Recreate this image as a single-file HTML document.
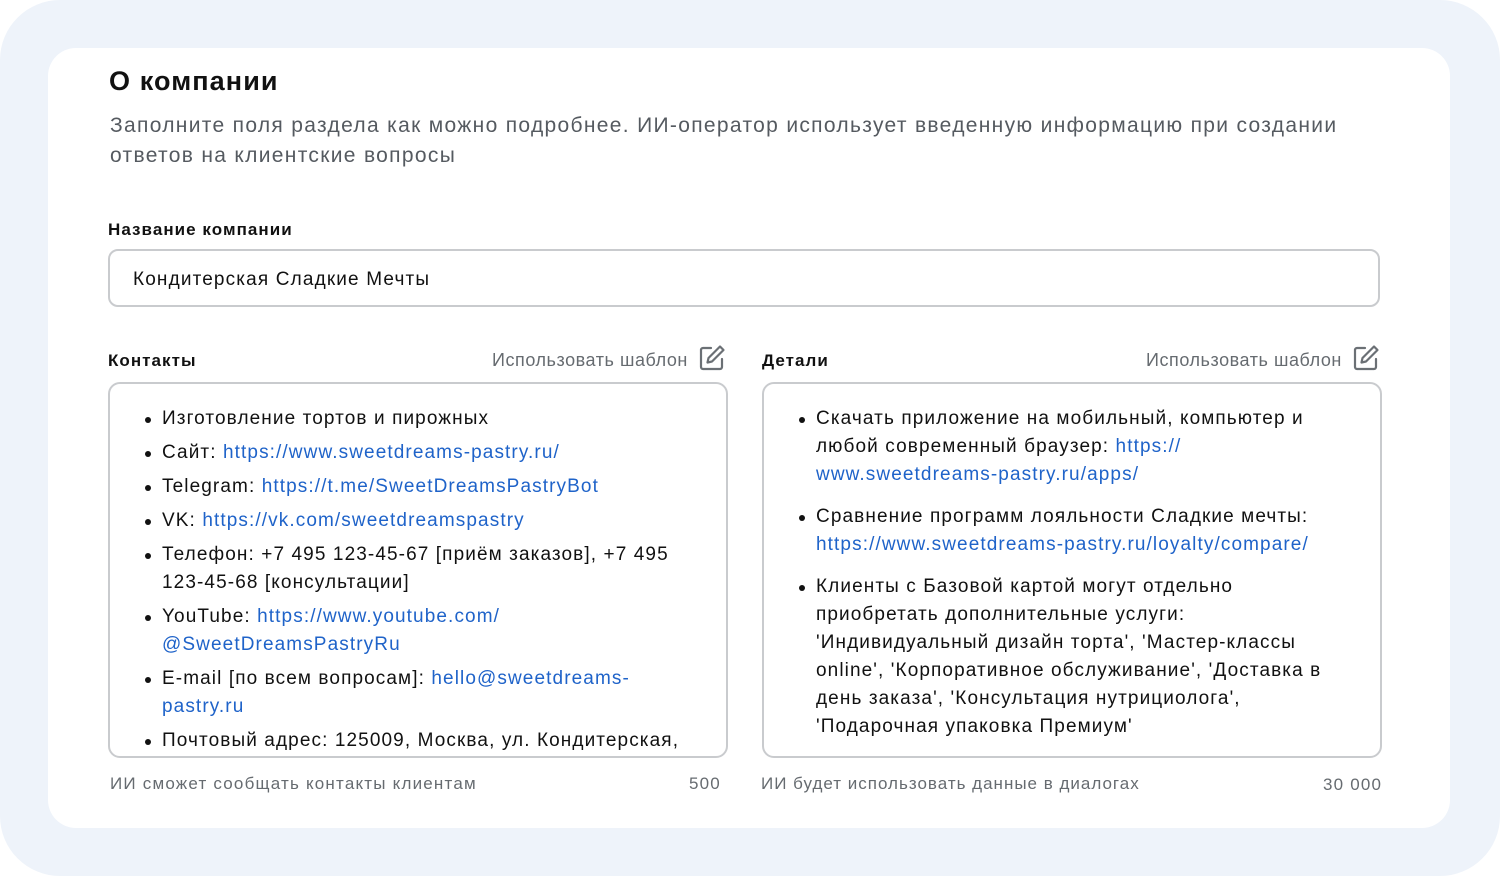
<!DOCTYPE html>
<html><head><meta charset="utf-8"><style>
*{box-sizing:border-box;margin:0;padding:0}
body{width:1500px;height:876px;background:#fff;font-family:"Liberation Sans",sans-serif;overflow:hidden;position:relative}
.bg{position:absolute;left:0;top:0;width:1500px;height:876px;background:#eef3fa;border-radius:60px}
.card{position:absolute;left:48px;top:48px;width:1402px;height:780px;background:#fff;border-radius:28px}
.abs{position:absolute}
h1{position:absolute;left:109px;top:66px;font-size:27px;font-weight:bold;color:#111;letter-spacing:1.1px}
.sub{left:110px;top:111px;font-size:21px;line-height:30px;color:#555a60;width:1270px;letter-spacing:1.32px}
.lbl{font-size:17px;font-weight:bold;color:#111;letter-spacing:1.05px}
.inp{left:108px;top:249px;width:1272px;height:58px;border:2px solid #c9cbce;border-radius:10px;font-size:19px;padding:18px 0 0 23px;color:#111;letter-spacing:1.15px}
.tpl{font-size:18px;color:#666b70;letter-spacing:.55px}
.ta{width:620px;height:376px;border:2px solid #c9cbce;border-radius:12px;overflow:hidden;padding:21px 20px 0 0}
ul{list-style:none;font-size:19px;line-height:28px;color:#111;letter-spacing:1.1px}
li{position:relative;padding-left:52px;margin-bottom:6px}
li:before{content:"";position:absolute;left:35px;top:12px;width:6px;height:6px;border-radius:50%;background:#111}
.r li{margin-bottom:14px}
a{color:#1f63c9;text-decoration:none}
.foot{font-size:17px;color:#666b70;letter-spacing:1.2px}
</style></head><body>
<div class="bg"></div>
<div class="card"></div>
<h1>О компании</h1>
<div class="abs sub">Заполните поля раздела как можно подробнее. ИИ-оператор использует введенную информацию при создании ответов на клиентские вопросы</div>
<div class="abs lbl" style="left:108px;top:220px">Название компании</div>
<div class="abs inp">Кондитерская Сладкие Мечты</div>

<div class="abs lbl" style="left:108px;top:351px">Контакты</div>
<div class="abs tpl" style="left:492px;top:350px">Использовать шаблон</div>
<svg class="abs" style="left:698px;top:344px" width="28" height="28" viewBox="0 0 28 28" fill="none" stroke="#6b7075" stroke-width="2.2" stroke-linejoin="round" stroke-linecap="round"><path d="M13 4H5a2 2 0 0 0-2 2v17a2 2 0 0 0 2 2h17a2 2 0 0 0 2-2v-8"/><path d="M22 2.5l3.5 3.5L14 17.5l-4.5 1 1-4.5z"/></svg>
<div class="abs ta" style="left:108px;top:382px"><ul>
<li>Изготовление тортов и пирожных</li>
<li>Сайт: <a>https://www.sweetdreams-pastry.ru/</a></li>
<li>Telegram: <a>https://t.me/SweetDreamsPastryBot</a></li>
<li>VK: <a>https://vk.com/sweetdreamspastry</a></li>
<li>Телефон: +7 495 123-45-67 [приём заказов], +7 495<br>123-45-68 [консультации]</li>
<li>YouTube: <a>https://www.youtube.com/<br>@SweetDreamsPastryRu</a></li>
<li>E-mail [по всем вопросам]: <a>hello@sweetdreams-<br>pastry.ru</a></li>
<li>Почтовый адрес: 125009, Москва, ул. Кондитерская,<br>д. 1</li>
</ul></div>
<div class="abs foot" style="left:110px;top:774px">ИИ сможет сообщать контакты клиентам</div>
<div class="abs foot" style="left:689px;top:774px">500</div>

<div class="abs lbl" style="left:762px;top:351px">Детали</div>
<div class="abs tpl" style="left:1146px;top:350px">Использовать шаблон</div>
<svg class="abs" style="left:1352px;top:344px" width="28" height="28" viewBox="0 0 28 28" fill="none" stroke="#6b7075" stroke-width="2.2" stroke-linejoin="round" stroke-linecap="round"><path d="M13 4H5a2 2 0 0 0-2 2v17a2 2 0 0 0 2 2h17a2 2 0 0 0 2-2v-8"/><path d="M22 2.5l3.5 3.5L14 17.5l-4.5 1 1-4.5z"/></svg>
<div class="abs ta r" style="left:762px;top:382px;width:620px"><ul>
<li>Скачать приложение на мобильный, компьютер и<br>любой современный браузер: <a>https://<br>www.sweetdreams-pastry.ru/apps/</a></li>
<li>Сравнение программ лояльности Сладкие мечты:<br><a>https://www.sweetdreams-pastry.ru/loyalty/compare/</a></li>
<li>Клиенты с Базовой картой могут отдельно<br>приобретать дополнительные услуги:<br>'Индивидуальный дизайн торта', 'Мастер-классы<br>online', 'Корпоративное обслуживание', 'Доставка в<br>день заказа', 'Консультация нутрициолога',<br>'Подарочная упаковка Премиум'</li>
</ul></div>
<div class="abs foot" style="left:761px;top:774px;letter-spacing:1px">ИИ будет использовать данные в диалогах</div>
<div class="abs foot" style="left:1323px;top:775px">30 000</div>
</body></html>
